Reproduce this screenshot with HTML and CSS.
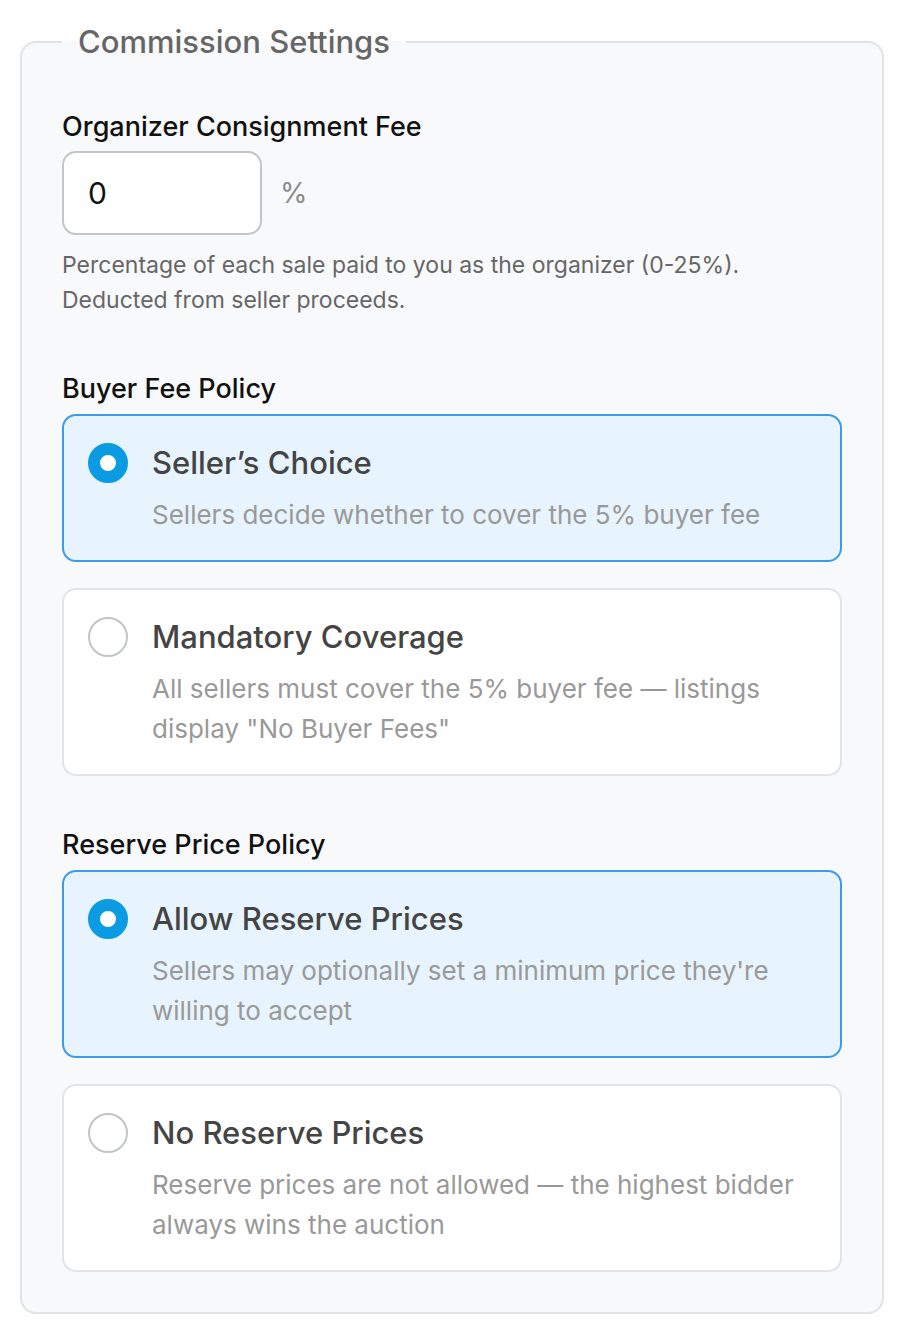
FILE: index.html
```html
<!DOCTYPE html>
<html lang="en">
<head>
<meta charset="utf-8">
<title>Commission Settings</title>
<link rel="stylesheet" href="styles.css">
</head>
<body>
<div class="page">
  <fieldset class="panel">
    <legend class="panel-title">Commission Settings</legend>

    <div class="field">
      <div class="label">Organizer Consignment Fee</div>
      <div class="input-row">
        <div class="input">0</div>
        <span class="unit">%</span>
      </div>
      <p class="help">Percentage of each sale paid to you as the organizer (0-25%).<br>Deducted from seller proceeds.</p>
    </div>

    <div class="field group">
      <div class="label">Buyer Fee Policy</div>
      <div class="options">
        <div class="option selected">
          <span class="radio"></span>
          <div class="option-text">
            <div class="option-title">Seller’s Choice</div>
            <div class="option-desc">Sellers decide whether to cover the 5% buyer fee</div>
          </div>
        </div>
        <div class="option">
          <span class="radio"></span>
          <div class="option-text">
            <div class="option-title">Mandatory Coverage</div>
            <div class="option-desc">All sellers must cover the 5% buyer fee — listings display "No Buyer Fees"</div>
          </div>
        </div>
      </div>
    </div>

    <div class="field group">
      <div class="label">Reserve Price Policy</div>
      <div class="options">
        <div class="option selected">
          <span class="radio"></span>
          <div class="option-text">
            <div class="option-title">Allow Reserve Prices</div>
            <div class="option-desc">Sellers may optionally set a minimum price they're willing to accept</div>
          </div>
        </div>
        <div class="option">
          <span class="radio"></span>
          <div class="option-text">
            <div class="option-title">No Reserve Prices</div>
            <div class="option-desc">Reserve prices are not allowed — the highest bidder always wins the auction</div>
          </div>
        </div>
      </div>
    </div>
  </fieldset>
</div>
</body>
</html>
```

FILE: styles.css
```css
* { box-sizing: border-box; }
html, body { margin: 0; padding: 0; background: #ffffff; }
body {
  font-family: Inter, "Noto Sans", "Liberation Sans", sans-serif;
  color: #111;
}
.page {
  padding: 20px 20px 20px 20px;
}
.panel {
  margin: 0;
  border: 2px solid #e1e3e5;
  border-radius: 16px;
  background: #f8f9fb;
  padding: 47px 40px 40px 40px;
  min-width: 0;
}
.panel-title {
  padding: 0 16px;
  font-size: 31px;
  line-height: 44px;
  font-weight: 500;
  color: #666;
}
.label {
  font-size: 27px;
  line-height: 32px;
  font-weight: 500;
  color: #111;
}
.input-row {
  display: flex;
  align-items: center;
  gap: 18px;
  margin-top: 8px;
}
.input {
  width: 200px;
  height: 84px;
  border: 2px solid #c3c6c9;
  border-radius: 14px;
  background: #fff;
  font-size: 30px;
  line-height: 80px;
  padding-left: 24px;
  color: #111;
}
.unit {
  font-size: 28px;
  color: #8a8a8a;
}
.help {
  margin: 13px 0 0 0;
  font-size: 23px;
  line-height: 35px;
  color: #666;
}
.group { margin-top: 55px; }
.group + .group { margin-top: 53px; }
.options {
  display: flex;
  flex-direction: column;
  gap: 26px;
  margin-top: 9px;
}
.option {
  display: flex;
  gap: 24px;
  align-items: flex-start;
  border: 2px solid #e2e4e6;
  border-radius: 14px;
  background: #fff;
  padding: 27px 24px 25px 24px;
}
.option.selected {
  border-color: #3d9be9;
  background: #e7f4fd;
}
.radio {
  flex: none;
  width: 40px;
  height: 40px;
  border-radius: 50%;
  border: 2px solid #c1c5c8;
  background: #fff;
}
.option.selected .radio {
  border: 12px solid #0b9be3;
}
.option-text { flex: 1; min-width: 0; }
.option-title {
  font-size: 31px;
  line-height: 40px;
  font-weight: 500;
  color: #444;
}
.option-desc {
  margin-top: 12px;
  font-size: 26px;
  line-height: 40px;
  color: #999;
}
```
